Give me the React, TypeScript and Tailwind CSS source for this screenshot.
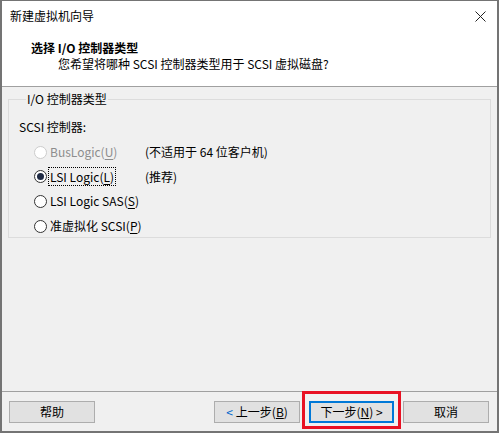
const font = "font-['Microsoft_YaHei','Noto_Sans_CJK_SC',sans-serif]";

function Radio({
  label,
  u,
  tail,
  note,
  checked,
  disabled,
  focused,
}: {
  label: string
  u: string
  tail?: string
  note?: string
  checked?: boolean
  disabled?: boolean
  focused?: boolean
}) {
  return (
    <div className="flex items-center h-[24.6px] whitespace-nowrap">
      <span
        className={`w-[13px] h-[13px] shrink-0 rounded-full border flex items-center justify-center bg-white ${
          disabled ? 'border-[#cccccc]' : 'border-[#333333]'
        }`}
      >
        {checked && <span className="w-[7px] h-[7px] rounded-full bg-[#1f2a44]" />}
      </span>
      <span
        className={`ml-[2px] w-[94px] shrink-0 ${disabled ? 'text-[#8d8d8d]' : 'text-black'}`}
      >
        <span className={focused ? 'outline outline-1 outline-dotted outline-black px-[1px]' : 'px-[1px]'}>
          {label}(<span className="underline underline-offset-2">{u}</span>){tail}
        </span>
      </span>
      {note && <span className="ml-[2px]">{note}</span>}
    </div>
  )
}

function Btn({ children, primary }: { children: React.ReactNode; primary?: boolean }) {
  return (
    <div
      className={`h-[22px] flex items-center justify-center bg-[#e1e1e1] whitespace-nowrap ${
        primary ? 'w-[85px] border-2 border-[#0078d7]' : 'w-[86px] border border-[#adadad]'
      }`}
    >
      {children}
    </div>
  )
}

export default function App() {
  return (
    <div
      className={`${font} w-[499px] h-[433px] bg-[#f0f0f0] border-x-2 border-b-2 border-t border-[#747474] flex flex-col text-[12px] text-black leading-none`}
    >
      <div className="bg-white h-[30px] flex items-center justify-between pl-[8px] pr-[10px] shrink-0">
        <span>新建虚拟机向导</span>
        <svg width="11" height="11" viewBox="0 0 11 11" className="mr-[1px]">
          <path d="M0.5 0.5L10.5 10.5M10.5 0.5L0.5 10.5" stroke="#222" strokeWidth="1" />
        </svg>
      </div>
      <div className="bg-white h-[56px] border-b border-[#a0a0a0] shrink-0 pl-[29px] pt-[10px]">
        <div className="font-bold h-[14px] flex items-center">选择 I/O 控制器类型</div>
        <div className="ml-[27px] mt-[2px] h-[14px] flex items-center">
          您希望将哪种 SCSI 控制器类型用于 SCSI 虚拟磁盘?
        </div>
      </div>
      <div className="flex-1 px-[6px] pt-[5px]">
        <fieldset className="border border-[#dcdcdc] h-[146px] pl-[10px] pr-[10px] m-0">
          <legend className="ml-[7px] px-[1px] h-[14px] leading-[14px] text-[12px]">I/O 控制器类型</legend>
          <div className="mt-[14px] h-[14px] flex items-center">SCSI 控制器:</div>
          <div className="mt-[6px] pl-[15px]">
            <Radio label="BusLogic" u="U" note="(不适用于 64 位客户机)" disabled />
            <Radio label="LSI Logic" u="L" note="(推荐)" checked focused />
            <Radio label="LSI Logic SAS" u="S" />
            <Radio label="准虚拟化 SCSI" u="P" />
          </div>
        </fieldset>
      </div>
      <div className="h-[40px] border-t border-[#a0a0a0] shrink-0 flex items-start pt-[9px] pl-[7px] pr-[8px]">
        <Btn>帮助</Btn>
        <div className="flex-1" />
        <div className="flex gap-[9px]">
          <Btn>
            <span className="text-[#0066cc] mr-[3px]">&lt;</span>上一步(<span className="underline">B</span>)
          </Btn>
          <div className="relative">
            <Btn primary>
              下一步(<span className="underline">N</span>) &gt;
            </Btn>
            <div className="absolute -left-[7px] -top-[10px] w-[99px] h-[38px] border-[3px] border-[#e81123]" />
          </div>
          <Btn>取消</Btn>
        </div>
      </div>
    </div>
  )
}
